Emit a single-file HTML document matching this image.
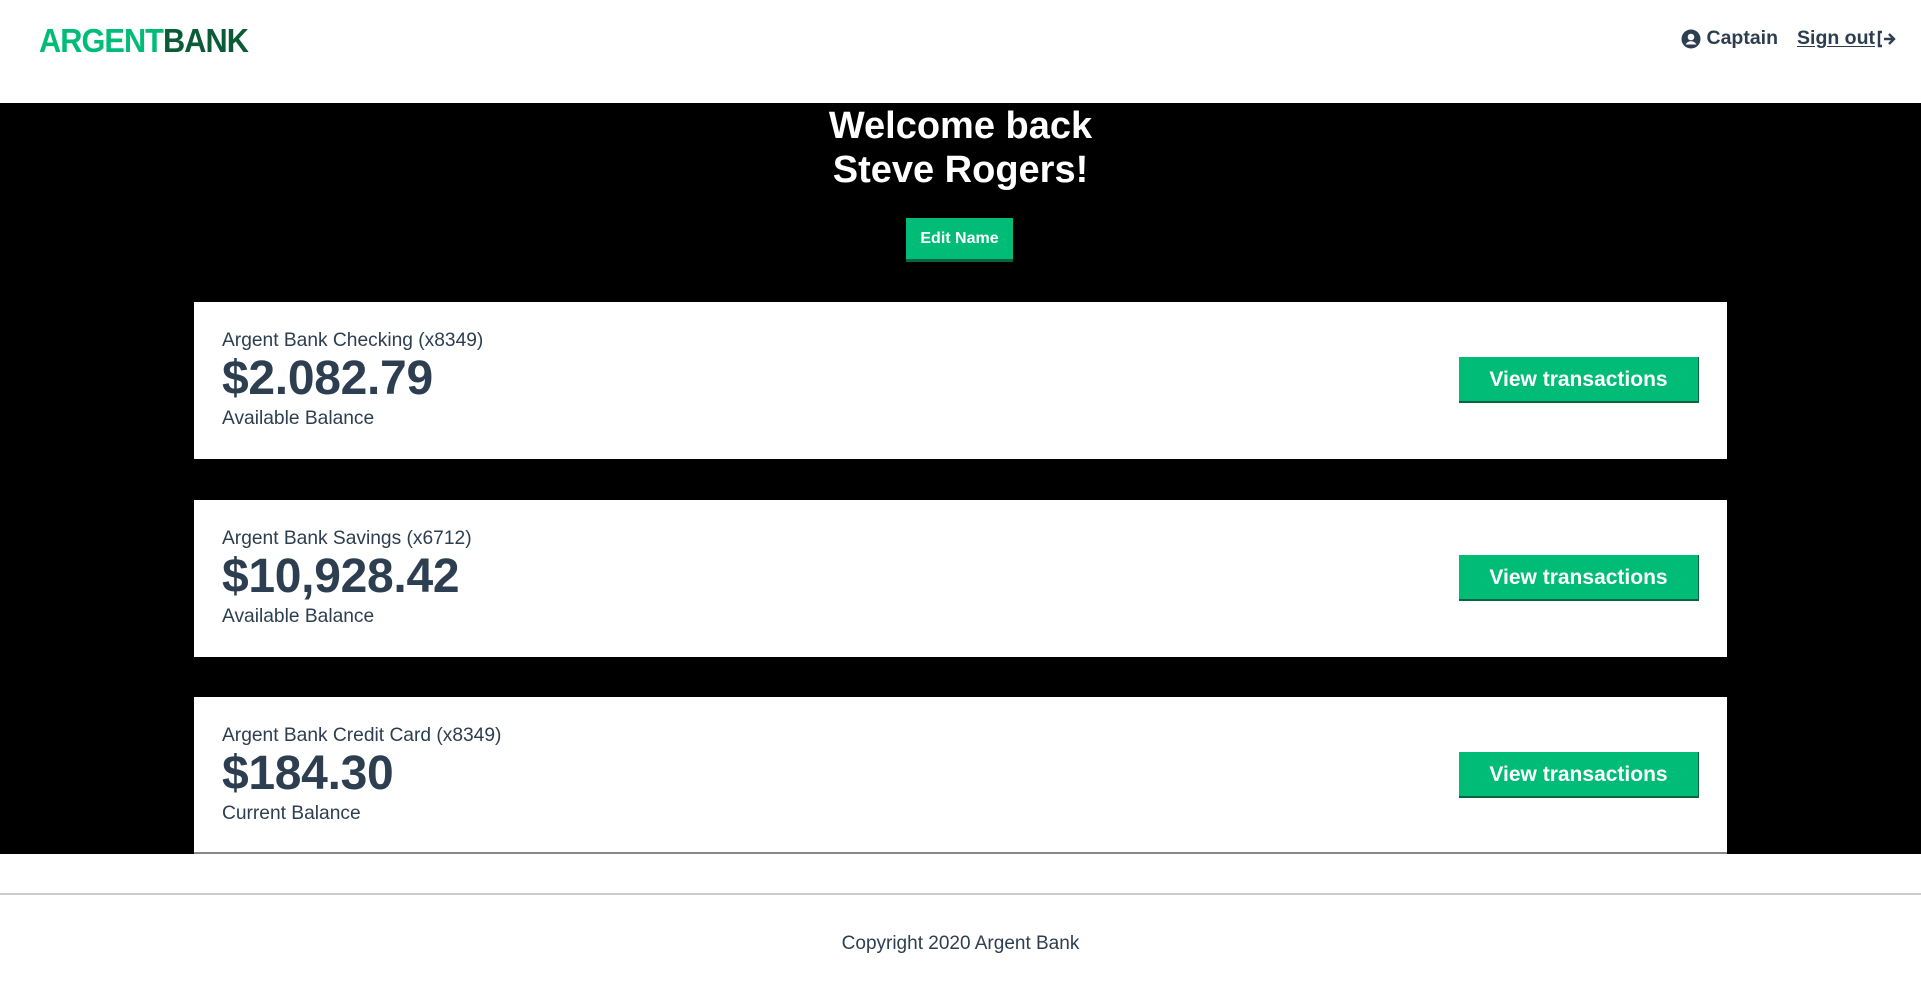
<!DOCTYPE html>
<html><head><meta charset="utf-8"><style>
*{margin:0;padding:0;box-sizing:border-box}
body{width:1921px;height:982px;font-family:"Liberation Sans",Arial,sans-serif;color:#2c3e50;background:#fff;position:relative;overflow:hidden}
.hdr{position:absolute;left:0;top:0;width:1921px;height:103px}
.logo{position:absolute;left:39px;top:22px;font-size:33px;font-weight:bold;letter-spacing:-1px;transform:scaleX(0.93);transform-origin:left}
.logo .a{color:#00bc77}.logo .b{color:#0b5b37}
.nav{position:absolute;top:27px;right:25px;font-size:19.5px;font-weight:bold;display:flex;align-items:center;gap:19px}
.nav span{display:flex;align-items:center;gap:6px}
.nav u{text-decoration:underline;text-underline-offset:2px}
.main{position:absolute;left:0;top:103px;width:1921px;height:751px;background:#000}
h1{position:absolute;left:0;width:100%;top:0;text-align:center;color:#fff;font-size:38px;line-height:44px;padding-top:1px}
.edit{position:absolute;left:906px;top:115px;width:107px;height:44px;background:#00bc77;border-bottom:3px solid #08653f;color:#fff;font-weight:bold;font-size:16px;text-align:center;line-height:42px}
.card{position:absolute;left:194px;width:1533px;height:157px;background:#fff}
.card .t{position:absolute;left:28px;top:28px;font-size:19.2px}
.card .m{position:absolute;left:28px;top:49px;font-size:48px;font-weight:bold;letter-spacing:-0.3px}
.card .s{position:absolute;left:28px;top:106px;font-size:19.2px}
.card .btn{position:absolute;left:1265px;top:55px;width:240px;height:46px;background:#00bc77;border-bottom:2px solid #08653f;border-right:1px solid #08653f;color:#fff;font-weight:bold;font-size:21px;text-align:center;line-height:46px}
.foot{position:absolute;left:0;top:893px;width:1921px;border-top:2px solid #ccc;text-align:center;font-size:19px;padding-top:38px}
</style></head><body>
<div class="hdr">
<div class="logo"><span class="a">ARGENT</span><span class="b">BANK</span></div>
<div class="nav"><span><svg width="20" height="20" viewBox="0 0 20 20"><circle cx="10" cy="10" r="9.5" fill="#2c3e50"/><circle cx="10" cy="8" r="3.3" fill="#fff"/><path d="M4.5 15.5c1.5-2.5 3.5-3.3 5.5-3.3s4 .8 5.5 3.3" fill="#fff"/></svg>Captain</span><span><u>Sign out</u><svg width="20" height="18" viewBox="0 0 20 18" style="margin-left:-5px"><path d="M6 2H3v14h3" fill="none" stroke="#2c3e50" stroke-width="2.4"/><path d="M8 9h10M13 4l5 5-5 5" fill="none" stroke="#2c3e50" stroke-width="2.4"/></svg></span></div>
</div>
<div class="main">
<h1>Welcome back<br>Steve Rogers!</h1>
<div class="edit">Edit Name</div>
<div class="card" style="top:199px"><div class="t">Argent Bank Checking (x8349)</div><div class="m">$2.082.79</div><div class="s">Available Balance</div><div class="btn">View transactions</div></div>
<div class="card" style="top:397px"><div class="t">Argent Bank Savings (x6712)</div><div class="m">$10,928.42</div><div class="s">Available Balance</div><div class="btn">View transactions</div></div>
<div class="card" style="top:594px;border-bottom:2px solid #888"><div class="t">Argent Bank Credit Card (x8349)</div><div class="m">$184.30</div><div class="s">Current Balance</div><div class="btn">View transactions</div></div>
</div>
<div class="foot">Copyright 2020 Argent Bank</div>
</body></html>
